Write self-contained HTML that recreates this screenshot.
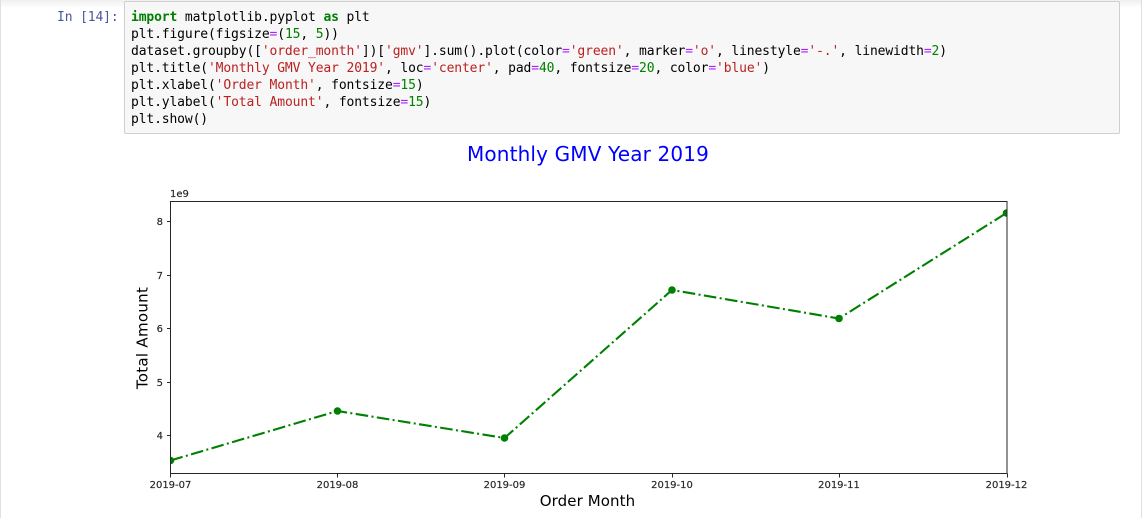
<!DOCTYPE html>
<html><head><meta charset="utf-8"><style>
html,body{margin:0;padding:0;background:#fff;width:1142px;height:518px;overflow:hidden}
body{position:relative}
.abs{position:absolute}
#lb{left:0;top:0;width:1px;height:518px;background:#e0e0e0}
#rb{left:1141px;top:0;width:1px;height:518px;background:#e0e0e0}
#sh{left:0;top:0;width:1142px;height:8px;background:linear-gradient(#efefef,#fff)}
#box{left:124px;top:1px;width:994px;height:131px;background:#f7f7f7;border:1px solid #cfcfcf;border-radius:2px}
#prompt{left:57px;top:9px;font:13px/17px "DejaVu Sans Mono",monospace;letter-spacing:-.13px;color:#4a569f;white-space:pre}
#code{left:131px;top:9px;margin:0;font:13px/17px "DejaVu Sans Mono",monospace;letter-spacing:-.13px;color:#000;white-space:pre}
.k{color:#008000;font-weight:bold}.s{color:#ba2121}.n{color:#008000}.o{color:#aa22ff}
svg{position:absolute;left:0;top:0}
</style></head><body>
<div class="abs" id="sh"></div><div class="abs" id="lb"></div><div class="abs" id="rb"></div>
<div class="abs" id="box"></div>
<div class="abs" id="prompt">In [14]:</div>
<pre class="abs" id="code"><span class="k">import</span> matplotlib.pyplot <span class="k">as</span> plt
plt.figure(figsize<span class="o">=</span>(<span class="n">15</span>, <span class="n">5</span>))
dataset.groupby([<span class="s">'order_month'</span>])[<span class="s">'gmv'</span>].sum().plot(color<span class="o">=</span><span class="s">'green'</span>, marker<span class="o">=</span><span class="s">'o'</span>, linestyle<span class="o">=</span><span class="s">'-.'</span>, linewidth<span class="o">=</span><span class="n">2</span>)
plt.title(<span class="s">'Monthly GMV Year 2019'</span>, loc<span class="o">=</span><span class="s">'center'</span>, pad<span class="o">=</span><span class="n">40</span>, fontsize<span class="o">=</span><span class="n">20</span>, color<span class="o">=</span><span class="s">'blue'</span>)
plt.xlabel(<span class="s">'Order Month'</span>, fontsize<span class="o">=</span><span class="n">15</span>)
plt.ylabel(<span class="s">'Total Amount'</span>, fontsize<span class="o">=</span><span class="n">15</span>)
plt.show()</pre>
<svg width="1142" height="518" viewBox="0 0 1142 518" font-family="'DejaVu Sans',sans-serif">
<defs><clipPath id="c"><rect x="170.5" y="201.5" width="836.5" height="271.5"/></clipPath></defs>
<text x="588" y="161" font-size="20" fill="#0000ff" text-anchor="middle" letter-spacing=".15">Monthly GMV Year 2019</text>
<text x="170" y="197" font-size="10" fill="#262626" stroke="#262626" stroke-width=".15">1e9</text>
<g clip-path="url(#c)">
<polyline points="170.5,460.5 337.5,411 504.5,438 672,290 839,318.5 1006.5,213" fill="none" stroke="#008000" stroke-width="2.1" stroke-dasharray="12.6,3.4,2,3.4"/>
<g fill="#008000"><circle cx="170.5" cy="460.5" r="3.8"/><circle cx="337.5" cy="411" r="3.8"/><circle cx="504.5" cy="438" r="3.8"/><circle cx="672" cy="290" r="3.8"/><circle cx="839" cy="318.5" r="3.8"/><circle cx="1006.5" cy="213" r="3.8"/></g>
</g>
<rect x="170.5" y="201.5" width="836.5" height="272" fill="none" stroke="#262626" stroke-width="1"/>
<g stroke="#262626" stroke-width="1">
<path d="M167 221.5h3.5M167 275.5h3.5M167 328.5h3.5M167 382.5h3.5M167 435.5h3.5"/>
<path d="M170.5 473.5v4M337.5 473.5v4M504.5 473.5v4M672.5 473.5v4M839.5 473.5v4M1007.5 473.5v4"/>
</g>
<g font-size="10" fill="#262626" stroke="#262626" stroke-width=".15" text-anchor="end">
<text x="163" y="225">8</text><text x="163" y="279">7</text><text x="163" y="332">6</text><text x="163" y="386">5</text><text x="163" y="439">4</text>
</g>
<g font-size="10" fill="#262626" stroke="#262626" stroke-width=".15" text-anchor="middle">
<text x="170.5" y="488">2019-07</text><text x="337.5" y="488">2019-08</text><text x="504.5" y="488">2019-09</text><text x="672" y="488">2019-10</text><text x="839" y="488">2019-11</text><text x="1006.5" y="488">2019-12</text>
</g>
<text x="587.5" y="506" font-size="15" fill="#000" text-anchor="middle" letter-spacing=".1">Order Month</text>
<text transform="translate(147.5,338) rotate(-90)" font-size="15" fill="#000" text-anchor="middle" letter-spacing=".3">Total Amount</text>
</svg>
</body></html>
